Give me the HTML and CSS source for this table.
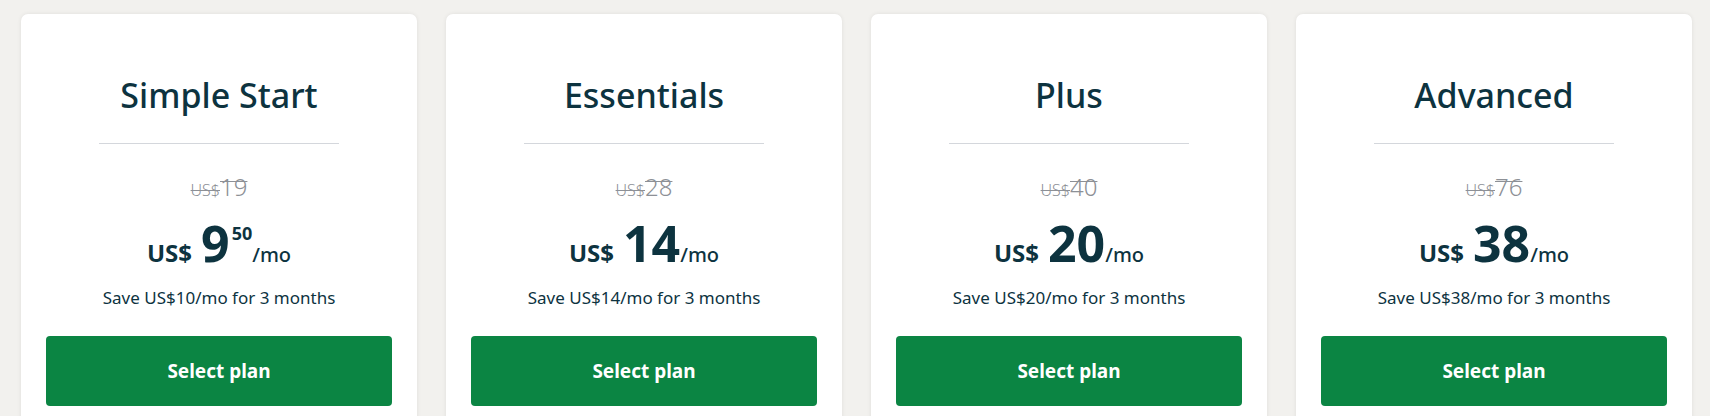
FILE: index.html
```html
<!DOCTYPE html>
<html lang="en">
<head>
<meta charset="utf-8">
<title>Plans</title>
<link rel="stylesheet" href="styles.css">
</head>
<body>
<main class="plans">
  <section class="card">
    <h2 class="title">Simple Start</h2>
    <hr class="divider">
    <div class="was"><span class="was-cur">US$</span><span class="was-num">19</span></div>
    <div class="price"><span class="cur">US$</span><span class="amt">9</span><span class="cents">50</span><span class="per">/mo</span></div>
    <p class="save">Save US$10/mo for 3 months</p>
    <button class="btn">Select plan</button>
  </section>
  <section class="card">
    <h2 class="title">Essentials</h2>
    <hr class="divider">
    <div class="was"><span class="was-cur">US$</span><span class="was-num">28</span></div>
    <div class="price"><span class="cur">US$</span><span class="amt">14</span><span class="per">/mo</span></div>
    <p class="save">Save US$14/mo for 3 months</p>
    <button class="btn">Select plan</button>
  </section>
  <section class="card">
    <h2 class="title">Plus</h2>
    <hr class="divider">
    <div class="was"><span class="was-cur">US$</span><span class="was-num">40</span></div>
    <div class="price"><span class="cur">US$</span><span class="amt">20</span><span class="per">/mo</span></div>
    <p class="save">Save US$20/mo for 3 months</p>
    <button class="btn">Select plan</button>
  </section>
  <section class="card">
    <h2 class="title">Advanced</h2>
    <hr class="divider">
    <div class="was"><span class="was-cur">US$</span><span class="was-num">76</span></div>
    <div class="price"><span class="cur">US$</span><span class="amt">38</span><span class="per">/mo</span></div>
    <p class="save">Save US$38/mo for 3 months</p>
    <button class="btn">Select plan</button>
  </section>
</main>
</body>
</html>
```
FILE: styles.css
```css
* { box-sizing: border-box; }
html, body {
  margin: 0;
  padding: 0;
  background: #f2f1ee;
  overflow: hidden;
  height: 416px;
}
body {
  font-family: "Noto Sans", "Lato", sans-serif;
  color: #0d333f;
}
.plans {
  display: grid;
  grid-template-columns: repeat(4, 396px);
  column-gap: 29px;
  padding: 14px 0 0 21px;
}
.card {
  background: #fff;
  border-radius: 7px;
  box-shadow: 0 0 4px rgba(0,0,0,0.08);
  height: 440px;
  padding: 61px 25px 0;
  display: flex;
  flex-direction: column;
  align-items: center;
}
.title {
  margin: 0;
  font-size: 34px;
  line-height: 40px;
  font-weight: 500;
  color: #0d333f;
}
.divider {
  width: 240px;
  height: 1px;
  border: 0;
  background: #d4d7dc;
  margin: 28px 0 0;
}
.was {
  margin-top: 30px;
  height: 26px;
  line-height: 26px;
  color: #8d9096;
  text-decoration: line-through;
  text-decoration-thickness: 1px;
  font-weight: 300;
}
.was-cur { font-size: 16px; }
.was-num { font-size: 24px; }
.price {
  margin-top: 16px;
  height: 54px;
  line-height: 54px;
  font-weight: 700;
  color: #0d333f;
  white-space: nowrap;
}
.cur { font-size: 24px; margin-right: 9px; }
.amt { font-size: 50px; }
.cents { font-size: 18px; vertical-align: 22px; line-height: 1; margin-left: 2px; }
.per { font-size: 20px; font-weight: 500; }
.save {
  margin: 18px 0 0;
  font-size: 17px;
  line-height: 20px;
  color: #0d333f;
}
.btn {
  margin-top: 28px;
  width: 346px;
  height: 70px;
  border: 0;
  border-radius: 4px;
  background: #0b8543;
  color: #fff;
  font-family: inherit;
  font-size: 19px;
  font-weight: 700;
}
```
